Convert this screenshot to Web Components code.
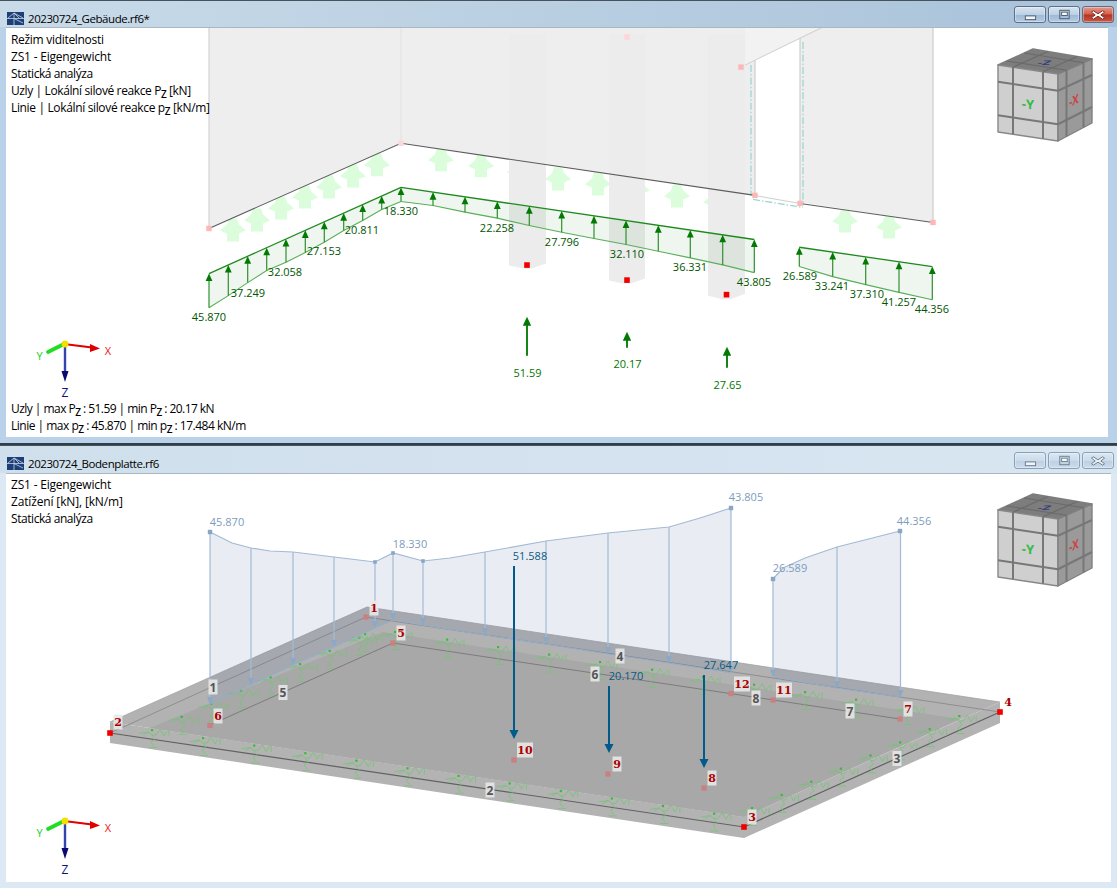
<!DOCTYPE html>
<html lang="cs">
<head>
<meta charset="utf-8">
<title>RFEM</title>
<style>
html,body{margin:0;padding:0;width:1117px;height:888px;overflow:hidden;background:#2f3f48}
body{font:12px "Noto Sans","Open Sans",sans-serif;color:#000}
rf-window + rf-window{margin-top:2px}
</style>
</head>
<body>
<template id="win-tpl">
<style>
:host{display:flex;flex-direction:column;position:relative;box-sizing:border-box;background:var(--frame)}
.bar{display:flex;align-items:flex-start;height:var(--bar);padding:0 3px 0 7px;gap:4px;background:linear-gradient(to right,var(--t1),var(--t2));flex:none;box-shadow:inset 0 1px 0 #45535e;box-sizing:border-box}
.name{flex:1;font:11.5px/17px "Open Sans","Noto Sans",sans-serif;letter-spacing:-.45px;color:#000;white-space:nowrap;margin-top:10px}
.client{flex:1;position:relative;background:#fff;margin:0 var(--right) var(--under) 6px;border-top:1px solid #aab6c0;overflow:hidden;box-sizing:border-box}
.btns{display:flex;gap:2px;margin-top:var(--btn)}
</style>
<div class="bar"><rf-logo></rf-logo><span class="name"></span>
<div class="btns"><rf-btn kind="min"></rf-btn><rf-btn kind="max"></rf-btn><rf-btn kind="close"></rf-btn></div></div>
<div class="client"><slot></slot></div>
</template>

<rf-window name="20230724_Gebäude.rf6*" active style="--frame:#b9d1e9;--t1:#c9dbe9;--t2:#a9c2da;--bar:27px;--btn:6px;--right:9px;--under:6px;height:443px">
  <gebaeude-scene></gebaeude-scene>
  <rf-note style="left:5px;top:3px">
    <rf-line style="letter-spacing:-.3px">Režim viditelnosti</rf-line>
    <rf-line style="letter-spacing:-.2px">ZS1 - Eigengewicht</rf-line>
    <rf-line style="letter-spacing:-.44px">Statická analýza</rf-line>
    <rf-line style="letter-spacing:-.385px">Uzly | Lokální silové reakce P<rf-sub>Z</rf-sub> [kN]</rf-line>
    <rf-line style="letter-spacing:-.35px">Linie | Lokální silové reakce p<rf-sub>Z</rf-sub> [kN/m]</rf-line>
  </rf-note>
  <rf-note style="left:5px;bottom:3px">
    <rf-line style="letter-spacing:-.54px">Uzly | max P<rf-sub>Z</rf-sub> : 51.59 | min P<rf-sub>Z</rf-sub> : 20.17 kN</rf-line>
    <rf-line style="letter-spacing:-.5px">Linie | max p<rf-sub>Z</rf-sub> : 45.870 | min p<rf-sub>Z</rf-sub> : 17.484 kN/m</rf-line>
  </rf-note>
  <rf-axes style="left:24px;top:307px"></rf-axes>
  <rf-cube style="left:987px;top:16px"></rf-cube>
</rf-window>

<rf-window name="20230724_Bodenplatte.rf6" style="--frame:#dce8f3;--t1:#cfdfeb;--t2:#d8e6f2;--bar:28px;--btn:7px;--right:6px;--under:6px;height:443px">
  <platte-scene></platte-scene>
  <rf-note style="left:5px;top:2px">
    <rf-line style="letter-spacing:-.2px">ZS1 - Eigengewicht</rf-line>
    <rf-line style="letter-spacing:-.15px">Zatížení [kN], [kN/m]</rf-line>
    <rf-line style="letter-spacing:-.44px">Statická analýza</rf-line>
  </rf-note>
  <rf-axes style="left:24px;top:338px"></rf-axes>
  <rf-cube style="left:987px;top:15px"></rf-cube>
</rf-window>

<script>
const P=a=>a.map(p=>p.join(',')).join(' ');
const poly=(a,s)=>`<polygon points="${P(a)}" ${s}/>`;
const pl=(a,s)=>`<polyline points="${P(a)}" fill="none" ${s}/>`;
const ln=(x1,y1,x2,y2,s)=>`<line x1="${x1}" y1="${y1}" x2="${x2}" y2="${y2}" ${s}/>`;
const sq=(x,y,c,r=3)=>`<rect x="${x-r}" y="${y-r}" width="${2*r}" height="${2*r}" fill="${c}"/>`;
const FONT=`font-family="Open Sans,Noto Sans,sans-serif"`;
const txt=(x,y,t,c,s=11)=>`<text x="${x}" y="${y}" text-anchor="middle" dominant-baseline="central" ${FONT} font-size="${s}" fill="${c}">${t}</text>`;

class RfWindow extends HTMLElement{
  constructor(){super();const r=this.attachShadow({mode:'open'});
    r.appendChild(document.getElementById('win-tpl').content.cloneNode(true));
    r.querySelector('.name').textContent=this.getAttribute('name');
    if(this.hasAttribute('active'))r.querySelectorAll('rf-btn').forEach(b=>b.setAttribute('active',''));
  }
}
class RfLogo extends HTMLElement{
  constructor(){super();this.attachShadow({mode:'open'}).innerHTML=`<style>:host{display:block;width:17px;height:13px;flex:none;margin-top:12px}svg{display:block}</style>
  <svg width="17" height="13" viewBox="0 0 17 13"><rect width="17" height="13" fill="#1d3f78"/><path d="M0 6.5H17M7 1V13M1 6 7 1 16 6M7 1 12 6M7 6.5 16 11" stroke="#c9d6ea" stroke-width=".8" fill="none"/></svg>`;}
}
class RfBtn extends HTMLElement{
  static get observedAttributes(){return ['active'];}
  connectedCallback(){this.draw();}
  attributeChangedCallback(){this.draw();}
  draw(){const k=this.getAttribute('kind'),a=this.hasAttribute('active');
    let bg=a?'linear-gradient(#d8e4f0,#bcd0e6 50%,#9db8d6 52%,#b4cbe3)':'linear-gradient(#dce8f3,#cbdbea 50%,#bccfe3 52%,#cbdcec)';
    if(k=='close'&&a)bg='linear-gradient(#e39a8c,#d2604e 48%,#b8321f 52%,#c6584a)';
    const gc=a?'#fff':'#e9eef4',st=a?'#4a5a6c':'#6b7c8d';
    const g=k=='min'?`<rect x="11" y="9.5" width="11" height="4" fill="#f1f5f9" stroke="${st}"/>`
      :k=='max'?`<rect x="11.5" y="3.5" width="10" height="9" fill="none" stroke="${st}" stroke-width="1"/><rect x="13.5" y="5.5" width="6" height="3.5" fill="#fff" stroke="${st}" stroke-width="1"/>`
      :`<path d="M11 4 16 7.2 21 4 23 5.5 19 8.5 23 11.5 21 13 16 9.8 11 13 9 11.5 13 8.5 9 5.5Z" fill="${gc}" stroke="${a?'#7a2a20':'#6b7c8d'}" stroke-width="1"/>`;
    const r=this.shadowRoot||this.attachShadow({mode:'open'});
    r.innerHTML=`<style>:host{display:block;width:32px;height:17px;box-sizing:border-box;border:1px solid ${a?'#5c6f85':'#8aa0b8'};border-radius:3px;background:${bg};box-shadow:inset 0 0 0 1px rgba(255,255,255,.35)}svg{display:block;margin:0}</style><svg width="30" height="15" viewBox="0 0 32 16">${g}</svg>`;}
}
class RfNote extends HTMLElement{
  constructor(){super();this.attachShadow({mode:'open'}).innerHTML=`<style>:host{display:flex;flex-direction:column;position:absolute;z-index:2;font:12px "Open Sans","Noto Sans",sans-serif;letter-spacing:-.25px;color:#000;white-space:nowrap}</style><slot></slot>`;}
}
class RfLine extends HTMLElement{
  constructor(){super();this.attachShadow({mode:'open'}).innerHTML=`<style>:host{display:block;height:17px;line-height:17px}</style><slot></slot>`;}
}
class RfSub extends HTMLElement{
  constructor(){super();this.attachShadow({mode:'open'}).innerHTML=`<style>:host{display:inline;font-size:10px;line-height:0;vertical-align:-3px;font-weight:600}</style><slot></slot>`;}
}
class RfAxes extends HTMLElement{
  constructor(){super();this.attachShadow({mode:'open'}).innerHTML=`<style>:host{display:block;position:absolute;z-index:2;width:90px;height:70px}svg{display:block}</style>
  <svg width="90" height="70" viewBox="30 335 90 70">
  ${ln(64,344,92,347.5,'stroke="#e00000" stroke-width="2.2"')}${poly([[100,348.5],[90,344],[90,352]],'fill="#e00000"')}
  ${ln(64,344,48,352,'stroke="#22dd22" stroke-width="3.8" stroke-linecap="round"')}
  ${ln(65,344,65,372,'stroke="#3344aa" stroke-width="2.4"')}${poly([[65,382],[61.5,371],[68.5,371]],'fill="#0a0a70"')}
  <circle cx="65" cy="344" r="3.4" fill="#f2e000"/>
  ${txt(108,350.5,'X','#ee1111',11)}${txt(39.5,355,'Y','#22cc22',11)}${txt(65,392,'Z','#101080',12)}
  </svg>`;}
}
class RfCube extends HTMLElement{
  constructor(){super();
    const TL=[998,65],TR=[1058,74],BL=[998,132],BR=[1058,141],RT=[1092,59],RB=[1092,123],BK=[1033,49];
    const mix=(a,b,t)=>[a[0]+(b[0]-a[0])*t,a[1]+(b[1]-a[1])*t];
    const g=(a,b,c,d,s)=>[.25,.75].map(t=>pl([mix(a,b,t),mix(c,d,t)],s)).join('');
    const S='stroke="#777" stroke-width="2"';
    const T='stroke="#6a6a6a" stroke-width="1.2"';
    this.attachShadow({mode:'open'}).innerHTML=`<style>:host{display:block;position:absolute;z-index:2;width:104px;height:100px}svg{display:block}</style>
    <svg width="104" height="100" viewBox="993 44 104 100">
    ${poly([TL,BK,RT,TR],'fill="#7d7d7d" stroke="#7d7d7d" stroke-width="1.5" stroke-linejoin="round"')}
    ${poly([TL,TR,BR,BL],'fill="#cfcfcf" stroke="#888" stroke-width="1.4" stroke-linejoin="round"')}
    ${poly([TR,RT,RB,BR],'fill="#9a9a9a" stroke="#808080" stroke-width="1.4" stroke-linejoin="round"')}
    ${g(TL,TR,BL,BR,S)}${g(TL,BL,TR,BR,S)}${g(TR,RT,BR,RB,S)}${g(TR,BR,RT,RB,S)}
    ${g(TL,BK,TR,RT,T)}${g(TL,TR,BK,RT,T)}
    <text transform="translate(1028 109) skewY(6)" text-anchor="middle" ${FONT} font-weight="700" font-size="13" fill="#33bb44">-Y</text>
    <text transform="translate(1074 105) skewY(-24) scale(.75 1)" text-anchor="middle" ${FONT} font-weight="700" font-size="13" fill="#cc4444">-X</text>
    <text transform="translate(1043 65) skewX(-30) scale(1 .45)" text-anchor="middle" ${FONT} font-weight="700" font-size="14" fill="#333f7c">-Z</text>
    </svg>`;}
}

function upArrow(x,t,b){return ln(x,t+5,x,b,'stroke="#2f8f2f" stroke-width="1.2"')+poly([[x,t],[x-3.4,t+7.5],[x+3.4,t+7.5]],'fill="#007a00"');}
function loadPart(top,base,xs,c){
  const lerp=(a,x)=>{for(let i=1;i<a.length;i++)if(x<=a[i][0]){const t=(x-a[i-1][0])/(a[i][0]-a[i-1][0]);return a[i-1][1]+(a[i][1]-a[i-1][1])*t;}return a[a.length-1][1];};
  let s=poly([...top,...[...base].reverse()],'fill="rgba(30,110,30,.07)"');
  s+=pl(base,'stroke="#58b058" stroke-width="1.1"')+pl(top,'stroke="#1d8a1d" stroke-width="1.3"');
  xs.forEach(x=>s+=upArrow(x,lerp(top,x),lerp(base,x)));
  return s;
}
class GebaeudeScene extends HTMLElement{
  constructor(){super();
    const fat=(x,y)=>poly([[x-4,y-12],[x+4,y-12],[x+6,y-6],[x+13,y],[x+6,y+3],[x+6,y+11],[x-6,y+11],[x-6,y+3],[x-13,y],[x-6,y-6]],'fill="#dcfddc"');
    let s='';
    s+=poly([[209,27],[933,27],[933,222],[755,195],[401,143],[209,228]],'fill="#eeeeee"');
    s+=poly([[755,60],[800,38],[800,203],[755,195]],'fill="#fff"');
    s+=poly([[745,65],[823,27],[745,27]],'fill="#f2f2f2"');
    s+=ln(209,27,209,228,'stroke="#d2d2d2" stroke-width="1.2"')+ln(401,27,401,143,'stroke="#e2e2e2"');
    s+=ln(933,27,933,222,'stroke="#c4c4c4" stroke-width="1"');
    s+=ln(745,65,823,27,'stroke="#cfcfcf" stroke-width="1"')+ln(755,60,755,195,'stroke="#cfcfcf" stroke-width="1.2"')+ln(800,38,800,203,'stroke="#cfcfcf" stroke-width="1.2"');
    [[233,230],[257,220],[281,208],[305,197],[329,187],[353,176],[377,165],[441,160],[481,166],[520,172],[558,179],[598,184],[637,190],[677,196],[716,202],[845,221],[889,227]].forEach(a=>s+=fat(...a));
    [[509,546,265,268,263],[609,645,280,283,278],[708,745,295,298.5,293]].forEach(([a,b,l,c,r])=>{
      s+=poly([[a,34],[b,34],[b,r],[(a+b)/2+4,c],[(a+b)/2-4,c],[a,l]],'fill="#ececec"');});
    const D='stroke="#9fd6d2" stroke-width="1.3" stroke-dasharray="7 2 1.5 2" fill="none"';
    s+=ln(751,65,751,195,D)+ln(803,42,803,205,D)+ln(753,199,803,207,D);
    s+=pl([[209,228],[401,143],[755,195]],'stroke="#5c5c5c" stroke-width="1.1"')+ln(755,195,800,203,'stroke="#cfcfcf" stroke-width="1"')+ln(800,203,933,222,'stroke="#5c5c5c" stroke-width="1.1"');
    [[209,228],[755,195],[800,203],[933,222],[741,67]].forEach(a=>s+=sq(a[0],a[1],'#ffb6b6',2.7));
    [[401,143],[627,37]].forEach(a=>s+=sq(a[0],a[1],'#ffd6d6',2.7));
    s+=loadPart([[209,273],[401,187]],[[209,307],[228.3,295],[247.7,282],[266.7,270],[286,261.7],[305.3,252],[324.3,241.7],[343.7,230],[362.7,220],[381.7,209],[401,201]],[209,228.3,247.7,266.7,286,305.3,324.3,343.7,362.7,381.7,401]);
    s+=loadPart([[401,187],[754.3,239]],[[401,201],[433,205],[465,211.7],[497.3,217.7],[529.3,225],[561.7,231.7],[594,238],[626,244],[658.3,250.7],[690.3,257.3],[722.7,264.3],[754.3,272]],[433,465,497.3,529.3,561.7,594,626,658.3,690.3,722.7,754.3]);
    s+=loadPart([[799.3,246.7],[932.3,266]],[[799.3,266],[832.7,276],[865.7,284],[899,291.7],[932.3,299]],[799.3,832.7,865.7,899,932.3]);
    const G='#005500';
    [['18.330',401,210],['20.811',362,229],['27.153',324,250],['32.058',285,271],['37.249',248,292],['45.870',209,316],['22.258',497,227],['27.796',562,241],['32.110',627,253],['36.331',690,266],['43.805',754,281],['26.589',800,275],['33.241',832,285],['37.310',867,293],['41.257',899,301],['44.356',932,308]].forEach(([t,x,y])=>s+=txt(x,y,t,G));
    [[527,264.5],[627,279.5],[726.5,294]].forEach(a=>s+=sq(a[0],a[1],'#f00000',2.8));
    [[527,316,355,'51.59',372],[627,331,347,'20.17',363],[727,346,367,'27.65',384]].forEach(([x,t,b,l,y])=>{
      s+=ln(x,t+6,x,b,'stroke="#0a7d0a" stroke-width="1.9"')+poly([[x,t],[x-4.2,t+9],[x+4.2,t+9]],'fill="#007a00"')+txt(x+.5,y,l,'#007700');});
    this.attachShadow({mode:'open'}).innerHTML=`<style>:host{position:absolute;inset:0;display:block}svg{display:block;width:100%;height:100%}</style><svg viewBox="6 28 1102 408" preserveAspectRatio="none">${s}</svg>`;
  }
}
class PlatteScene extends HTMLElement{
  constructor(){super();
    let s='';
    s+=poly([[110,722],[110,743],[744,838],[1000,723],[1000,702],[744,817]],'fill="#b3b3b3"');
    s+=poly([[110,722],[744,817],[1000,702],[367,607]],'fill="#b2b2b2"');
    s+=poly([[383,632],[960,719],[744,817],[150,728]],'fill="#a8a8a8"');
    s+=pl([[110,722],[367,607],[1000,702]],'stroke="#a3a3a3" stroke-width=".8"');
    s+=pl([[110,733],[366,617],[1000,712]],'stroke="#8e8e8e" stroke-width="1"');
    s+=pl([[210,725],[393,643],[900,719]],'stroke="#7c7c7c" stroke-width="1"');
    s+=pl([[110,733],[744,827],[1000,712]],'stroke="#616161" stroke-width="1.2"');
    const spr=(x,y)=>`<g transform="translate(${x} ${y})"><path d="M-13 3.5-4 2 0 5 4 5 8-1 12 6 15 1M17 0V6.5M-9 5-3 2M0 5 3 9-1 12 2 16M-3 17.5H5" fill="none" stroke="#70c670" stroke-width=".75"/><rect x="-1" y="-1" width="2.2" height="2.2" fill="#2fc02f"/></g>`;
    const pts=[];
    [754,805,856,907,703,652,600,549,498,447,395].forEach(x=>pts.push([x,647+(x-498)*.147]));
    for(let i=0;i<8;i++)pts.push([752+i*29.6,808-i*13.15]);
    for(let i=0;i<8;i++)pts.push([152+i*29.6,730-i*13.2]);
    pts.push([365,634]);
    for(let i=0;i<11;i++)pts.push([203+i*51.1,738+i*7.55]);
    pts.forEach(p=>s+=spr(p[0],+p[1].toFixed(1)));
    const B='#a3bad4';
    const tp=[[210,532],[232,543],[251,548],[270,551],[293,552],[334,557],[375,562],[393,553],[423,561],[450,558],[485,552],[546,541],[608,533],[669,527],[700,518],[731,508]];
    const bs=[[210,704],[251,685],[293,665],[334,647],[375,628],[393,620],[423,625],[485,635],[546,644],[608,654],[669,663],[731,672.7]];
    s+=poly([...tp,...[...bs].reverse()],'fill="rgba(70,105,160,.12)"');
    const tp2=[[773,579],[783,568],[805,558],[837,547],[900,531]],bs2=[[773,676.7],[837,688],[900.7,697]];
    s+=poly([...tp2,...[...bs2].reverse()],'fill="rgba(70,105,160,.12)"');
    s+=pl(tp,`stroke="${B}" stroke-width="1.2"`)+pl(tp2,`stroke="${B}" stroke-width="1.2"`);
    s+=pl(bs,`stroke="#93aecd" stroke-width="1.1"`)+pl(bs2,`stroke="#93aecd" stroke-width="1.1"`);
    const vert=(x,t,b)=>ln(x,t,x,b-5,`stroke="${B}" stroke-width="1.2"`)+poly([[x,b],[x-3,b-7],[x+3,b-7]],'fill="#8aa8c8"');
    [[210,532,704],[251,548,685],[293,552,665],[334,557,647],[375,562,628],[393,553,620],[423,561,625],[485,552,635],[546,541,644],[608,533,654],[669,527,663],[731,508,672.7],[773,579,676.7],[837,547,688],[900.5,531,697]].forEach(a=>s+=vert(...a));
    [[210,532],[375,562],[393,553],[423,561],[731,508],[773,579],[900,531]].forEach(a=>s+=sq(a[0],a[1],'#89a6c6',a[0]==210||a[0]==731||a[0]==773||a[0]==900?2.2:1.8));
    const L='#7d9cbd';
    s+=txt(227,521,'45.870',L)+txt(410,543,'18.330',L)+txt(746,496,'43.805',L)+txt(790,567,'26.589',L)+txt(914,520,'44.356',L);
    const NB='#005a8c';
    [[514,566,739,'51.588',530,555],[609,686,753,'20.170',626,675],[704,675,768,'27.647',721,664]].forEach(([x,t,b,l,lx,ly])=>{
      s+=ln(x,t,x,b-5,`stroke="${NB}" stroke-width="2"`)+poly([[x,b],[x-4.5,b-9],[x+4.5,b-9]],`fill="${NB}"`)+txt(lx,ly,l,'#0a5a85');});
    [[366,617],[393,643],[210,725.5],[514,760],[608,774],[704,788],[731,693.5],[773,700],[900,719]].forEach(a=>s+=sq(a[0],a[1],'#cb8080',2.6));
    [[110,733],[744,827],[1000,712]].forEach(a=>s+=sq(a[0],a[1],'#f00000',2.8));
    const tag=(x,y,t,w,h,c,f)=>`<rect x="${x-w/2}" y="${y-h/2}" width="${w}" height="${h}" fill="rgba(232,232,232,.88)"/>`+
      `<text x="${x}" y="${y}" text-anchor="middle" dominant-baseline="central" ${f} font-weight="700" fill="${c}">${t}</text>`;
    const SER=`style="font-family:'DejaVu Serif',serif;font-size:11px"`,SAN='font-family="Open Sans,Noto Sans,sans-serif" font-size="12"';
    [[374,608,'1'],[118,722,'2'],[401,633,'5'],[218,716,'6'],[525,750,'10'],[617,764,'9'],[712,778,'8'],[742,684,'12'],[784,690,'11'],[908,709,'7'],[752,817,'3']].forEach(([x,y,t])=>s+=tag(x,y,t,t.length>1?16:9,15,'#aa0000',SER));
    s+=`<text x="1008" y="702" text-anchor="middle" dominant-baseline="central" ${SER} font-weight="700" fill="#aa0000">4</text>`;
    [[213,687,'1'],[283,692.5,'5'],[620,656,'4'],[595,674,'6'],[756,698,'8'],[850,711,'7'],[897,758.5,'3'],[490,790,'2']].forEach(([x,y,t])=>s+=tag(x,y,t,9,15,'#555',SAN));
    this.attachShadow({mode:'open'}).innerHTML=`<style>:host{position:absolute;inset:0;display:block}svg{display:block;width:100%;height:100%}</style><svg viewBox="6 474 1105 408" preserveAspectRatio="none">${s}</svg>`;
  }
}
customElements.define('rf-logo',RfLogo);
customElements.define('rf-btn',RfBtn);
customElements.define('rf-note',RfNote);
customElements.define('rf-line',RfLine);
customElements.define('rf-sub',RfSub);
customElements.define('rf-axes',RfAxes);
customElements.define('rf-cube',RfCube);
customElements.define('gebaeude-scene',GebaeudeScene);
customElements.define('platte-scene',PlatteScene);
customElements.define('rf-window',RfWindow);
</script>
</body>
</html>
